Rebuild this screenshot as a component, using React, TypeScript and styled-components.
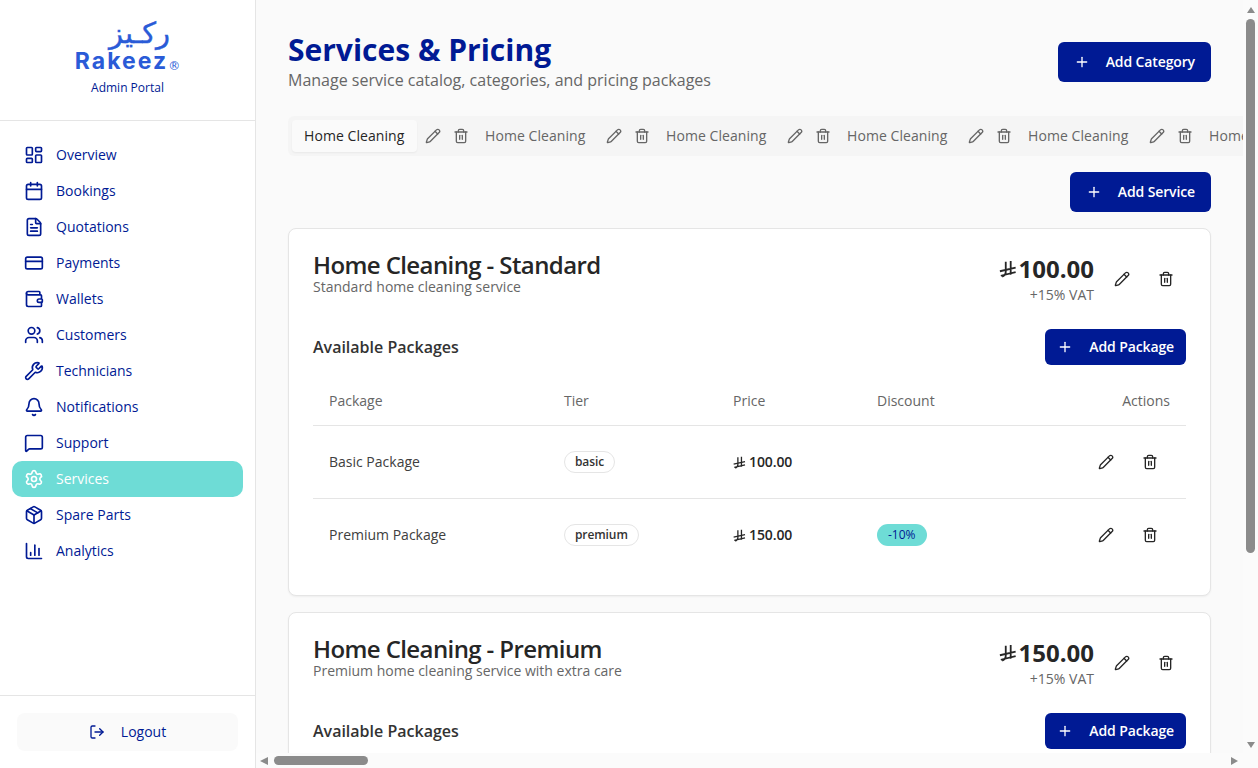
import styled, { createGlobalStyle } from "styled-components";
import {
  LayoutDashboard,
  Calendar,
  FileText,
  CreditCard,
  Wallet,
  Users,
  Wrench,
  Bell,
  MessageSquare,
  Settings,
  Package,
  BarChart3,
  LogOut,
  Pencil,
  Trash2,
  Plus,
} from "lucide-react";

const navy = "#001a94";
const teal = "#6edcd6";
const logoBlue = "#2a5bd7";
const thumb = "#8b8b8b";

const GlobalStyle = createGlobalStyle`
  html, body, #root {
    margin: 0;
    height: 100%;
  }
  body {
    font-family: "Open Sans", "Noto Sans", sans-serif;
    background: #fafafa;
    overflow: hidden;
  }
  * {
    box-sizing: border-box;
  }
`;

const Layout = styled.div`
  display: flex;
  height: 100vh;
`;

const Sidebar = styled.aside`
  display: flex;
  flex-direction: column;
  flex: 0 0 256px;
  height: 100%;
  background: #fff;
  border-right: 1px solid #e5e5e5;
`;

const Brand = styled.div`
  display: flex;
  flex-direction: column;
  align-items: center;
  height: 121px;
  padding-top: 18px;
  border-bottom: 1px solid #e5e5e5;
`;

const LogoArabic = styled.div`
  font-family: "DejaVu Sans", sans-serif;
  font-size: 29px;
  line-height: 30px;
  height: 30px;
  margin-left: 24px;
  color: ${logoBlue};
  -webkit-text-stroke: 0.4px ${logoBlue};
  direction: rtl;
`;

const LogoLatin = styled.div`
  margin-top: 1px;
  font-family: "Inter", sans-serif;
  font-size: 23px;
  font-weight: 700;
  line-height: 24px;
  letter-spacing: 2px;
  color: ${logoBlue};

  sup {
    font-family: "DejaVu Sans", sans-serif;
    font-size: 12px;
    font-weight: 400;
    letter-spacing: 0;
    vertical-align: -1px;
    line-height: 0;
  }
`;

const Portal = styled.div`
  margin-top: 7px;
  font-size: 12px;
  line-height: 16px;
  color: ${navy};
`;

const Nav = styled.nav`
  display: flex;
  flex-direction: column;
  flex: 1;
  padding: 16px 12px;
`;

const NavItem = styled.a<{ $active?: boolean }>`
  display: flex;
  align-items: center;
  gap: 12px;
  height: 36px;
  padding: 0 12px;
  border-radius: 10px;
  font-size: 14px;
  line-height: 20px;
  color: ${({ $active }) => ($active ? "#fff" : navy)};
  background: ${({ $active }) => ($active ? teal : "transparent")};
  font-weight: ${({ $active }) => ($active ? 500 : 400)};
`;

const SidebarFoot = styled.div`
  padding: 17px;
  border-top: 1px solid #e5e5e5;
`;

const LogoutButton = styled.button`
  display: flex;
  align-items: center;
  justify-content: center;
  gap: 16px;
  width: 100%;
  height: 38px;
  border: 0;
  border-radius: 8px;
  background: #fafafa;
  font: inherit;
  font-size: 14px;
  line-height: 20px;
  color: ${navy};
`;

const MainColumn = styled.div`
  display: flex;
  flex-direction: column;
  flex: 1;
  min-width: 0;
  height: 100%;
`;

const ContentRow = styled.div`
  display: flex;
  flex: 1;
  min-height: 0;
`;

const ScrollArea = styled.main`
  flex: 1;
  min-width: 0;
  overflow: hidden;
  background: #fafafa;
  padding: 32px;
`;

const VerticalBar = styled.div`
  display: flex;
  flex-direction: column;
  align-items: center;
  flex: 0 0 15px;
  padding: 7px 0 5px;
  background: #fbfbfb;
`;

const VerticalThumb = styled.div`
  width: 9px;
  height: 534px;
  margin-top: 6px;
  border-radius: 5px;
  background: ${thumb};
`;

const HorizontalBar = styled.div`
  display: flex;
  align-items: center;
  flex: 0 0 15px;
  padding: 0 20px 0 4px;
  background: #fbfbfb;
`;

const HorizontalThumb = styled.div`
  width: 94px;
  height: 9px;
  margin-left: 6px;
  border-radius: 5px;
  background: ${thumb};
`;

const Arrow = styled.div<{ $dir: "up" | "down" | "left" | "right" }>`
  width: 0;
  height: 0;
  flex: none;
  border-style: solid;
  border-color: transparent;
  ${({ $dir }) =>
    $dir === "up"
      ? `border-width: 0 4.5px 6px; border-bottom-color: ${thumb};`
      : $dir === "down"
        ? `margin-top: auto; border-width: 6px 4.5px 0; border-top-color: ${thumb};`
        : $dir === "left"
          ? `border-width: 4.5px 8px 4.5px 0; border-right-color: ${thumb};`
          : `margin-left: auto; border-width: 4.5px 0 4.5px 7px; border-left-color: ${thumb};`}
`;

const PageHead = styled.header`
  display: flex;
  justify-content: space-between;
  align-items: center;
  height: 60px;
  margin-bottom: 24px;
`;

const Title = styled.h1`
  margin: 0;
  font-size: 30px;
  line-height: 36px;
  font-weight: 700;
  color: ${navy};
`;

const Subtitle = styled.p`
  margin: 0;
  font-size: 16px;
  line-height: 24px;
  color: #666;
`;

const PrimaryButton = styled.button<{ $h: number; $px: number }>`
  display: flex;
  align-items: center;
  gap: 16px;
  height: ${({ $h }) => $h}px;
  padding: 0 ${({ $px }) => $px}px;
  border: 0;
  border-radius: 6px;
  background: ${navy};
  color: #fff;
  font: inherit;
  font-size: 14px;
  line-height: 20px;
  font-weight: 600;
  letter-spacing: -0.12px;
`;

const TabBar = styled.div`
  display: flex;
  width: max-content;
  align-items: center;
  height: 40px;
  padding: 4px;
  background: #f5f5f5;
  border-radius: 6px;
`;

const TabGroup = styled.div`
  display: flex;
  align-items: center;
`;

const Tab = styled.div<{ $active?: boolean }>`
  display: flex;
  align-items: center;
  min-width: 125px;
  height: 32px;
  padding: 0 12px;
  border-radius: 4px;
  font-size: 14px;
  line-height: 20px;
  letter-spacing: 0.07px;
  color: ${({ $active }) => ($active ? "#262626" : "#666")};
  background: ${({ $active }) => ($active ? "#fafafa" : "transparent")};
  box-shadow: ${({ $active }) => ($active ? "0 1px 2px rgba(0,0,0,.05)" : "none")};
`;

const TabIcons = styled.div`
  display: flex;
  align-items: center;
  gap: 12px;
  margin: 0 4px 0 8px;
  color: #666;
`;

const ServiceRow = styled.div`
  display: flex;
  justify-content: flex-end;
  margin: 16px 0;
`;

const Card = styled.section`
  margin-bottom: 16px;
  padding: 24px;
  background: #fff;
  border: 1px solid #e5e5e5;
  border-radius: 8px;
  box-shadow: 0 1px 2px rgba(0, 0, 0, 0.05);
`;

const CardHead = styled.div`
  display: flex;
  justify-content: space-between;
  height: 76px;
`;

const CardName = styled.h2`
  margin: 0;
  font-size: 24px;
  line-height: 24px;
  font-weight: 600;
  letter-spacing: -0.6px;
  color: #262626;
`;

const CardDesc = styled.p`
  margin: 0;
  font-size: 14px;
  line-height: 20px;
  color: #666;
`;

const PriceArea = styled.div`
  display: flex;
  align-items: center;
  gap: 10px;
  height: 52px;
  padding-right: 2px;
`;

const PriceBlock = styled.div`
  display: flex;
  flex-direction: column;
  align-items: flex-end;
`;

const BigPrice = styled.div`
  display: flex;
  align-items: center;
  gap: 2px;
  font-size: 24px;
  line-height: 32px;
  font-weight: 700;
  color: #262626;
`;

const Vat = styled.div`
  font-size: 14px;
  line-height: 20px;
  color: #666;
`;

const IconGroup = styled.div`
  display: flex;
  align-items: center;
  gap: 8px;
  color: #262626;
`;

const RowActions = styled(IconGroup)`
  margin-right: 2px;
`;

const IconButton = styled.span`
  display: flex;
  align-items: center;
  justify-content: center;
  width: 36px;
  height: 36px;
`;

const PackagesHead = styled.div`
  display: flex;
  justify-content: space-between;
  align-items: center;
  margin-bottom: 16px;
`;

const PackagesTitle = styled.h3`
  margin: 0;
  font-size: 16px;
  font-weight: 600;
  color: #333;
`;

const Table = styled.div`
  display: grid;
  grid-template-columns: 235px 169px 144px 1fr auto;
`;

const Cell = styled.div<{ $head?: boolean; $last?: boolean; $right?: boolean }>`
  display: flex;
  align-items: center;
  justify-content: ${({ $right }) => ($right ? "flex-end" : "flex-start")};
  height: ${({ $head, $last }) => ($head ? 45 : $last ? 72 : 73)}px;
  padding: 0 16px;
  padding-bottom: ${({ $head }) => ($head ? 4 : 0)}px;
  font-size: 14px;
  line-height: 20px;
  color: ${({ $head }) => ($head ? "#666" : "#404040")};
  border-bottom: ${({ $last }) => ($last ? "0" : "1px solid #e5e5e5")};
`;

const Tier = styled.span`
  padding: 2px 10px;
  border: 1px solid #e5e5e5;
  border-radius: 999px;
  font-size: 12px;
  line-height: 16px;
  font-weight: 600;
  letter-spacing: -0.1px;
  color: #333;
`;

const RowPrice = styled.span`
  display: flex;
  align-items: center;
  gap: 3px;
  font-weight: 600;
  letter-spacing: -0.1px;
  color: #262626;
`;

const Discount = styled.span`
  padding: 3px 11px;
  border-radius: 999px;
  background: ${teal};
  font-size: 12px;
  line-height: 16px;
  font-weight: 500;
  color: ${navy};
`;

const RiyalIcon = ({ size }: { size: number }) => (
  <svg width={size} height={size} viewBox="0 0 20 20" fill="none" stroke="currentColor" strokeWidth="2">
    <path d="M1 12.5 18.5 8.5M2 17.5 18.5 13.5M7.500 2v11c0 2.500-1.500 4.500-4 5.500M13 1v15.500" />
  </svg>
);

const navItems = [
  { label: "Overview", Icon: LayoutDashboard },
  { label: "Bookings", Icon: Calendar },
  { label: "Quotations", Icon: FileText },
  { label: "Payments", Icon: CreditCard },
  { label: "Wallets", Icon: Wallet },
  { label: "Customers", Icon: Users },
  { label: "Technicians", Icon: Wrench },
  { label: "Notifications", Icon: Bell },
  { label: "Support", Icon: MessageSquare },
  { label: "Services", Icon: Settings, active: true },
  { label: "Spare Parts", Icon: Package },
  { label: "Analytics", Icon: BarChart3 },
];

const services = [
  { name: "Home Cleaning - Standard", desc: "Standard home cleaning service", price: "100.00" },
  { name: "Home Cleaning - Premium", desc: "Premium home cleaning service with extra care", price: "150.00" },
];

const EditDelete = () => (
  <>
    <IconButton><Pencil size={16} /></IconButton>
    <IconButton><Trash2 size={16} /></IconButton>
  </>
);

const ServiceCard = ({ name, desc, price }: { name: string; desc: string; price: string }) => (
  <Card>
    <CardHead>
      <div>
        <CardName>{name}</CardName>
        <CardDesc>{desc}</CardDesc>
      </div>
      <PriceArea>
        <PriceBlock>
          <BigPrice>
            <RiyalIcon size={18} />
            {price}
          </BigPrice>
          <Vat>+15% VAT</Vat>
        </PriceBlock>
        <IconGroup><EditDelete /></IconGroup>
      </PriceArea>
    </CardHead>
    <PackagesHead>
      <PackagesTitle>Available Packages</PackagesTitle>
      <PrimaryButton $h={36} $px={12}>
        <Plus size={16} />
        Add Package
      </PrimaryButton>
    </PackagesHead>
    <Table>
      <Cell $head>Package</Cell>
      <Cell $head>Tier</Cell>
      <Cell $head>Price</Cell>
      <Cell $head>Discount</Cell>
      <Cell $head $right>Actions</Cell>
      <Cell>Basic Package</Cell>
      <Cell><Tier>basic</Tier></Cell>
      <Cell><RowPrice><RiyalIcon size={13} />100.00</RowPrice></Cell>
      <Cell />
      <Cell $right><RowActions><EditDelete /></RowActions></Cell>
      <Cell $last>Premium Package</Cell>
      <Cell $last><Tier>premium</Tier></Cell>
      <Cell $last><RowPrice><RiyalIcon size={13} />150.00</RowPrice></Cell>
      <Cell $last><Discount>-10%</Discount></Cell>
      <Cell $last $right><RowActions><EditDelete /></RowActions></Cell>
    </Table>
  </Card>
);

export default function App() {
  return (
    <Layout>
      <GlobalStyle />
      <Sidebar>
        <Brand>
          <LogoArabic>ركـيز</LogoArabic>
          <LogoLatin>Rakeez<sup>®</sup></LogoLatin>
          <Portal>Admin Portal</Portal>
        </Brand>
        <Nav>
          {navItems.map(({ label, Icon, active }) => (
            <NavItem key={label} $active={active}>
              <Icon size={20} />
              {label}
            </NavItem>
          ))}
        </Nav>
        <SidebarFoot>
          <LogoutButton>
            <LogOut size={16} />
            Logout
          </LogoutButton>
        </SidebarFoot>
      </Sidebar>
      <MainColumn>
        <ContentRow>
          <ScrollArea>
            <PageHead>
              <div>
                <Title>Services &amp; Pricing</Title>
                <Subtitle>Manage service catalog, categories, and pricing packages</Subtitle>
              </div>
              <PrimaryButton $h={40} $px={16}>
                <Plus size={16} />
                Add Category
              </PrimaryButton>
            </PageHead>
            <TabBar>
              {Array.from({ length: 6 }, (_, i) => (
                <TabGroup key={i}>
                  <Tab $active={i === 0}>Home Cleaning</Tab>
                  <TabIcons>
                    <Pencil size={16} />
                    <Trash2 size={16} />
                  </TabIcons>
                </TabGroup>
              ))}
            </TabBar>
            <ServiceRow>
              <PrimaryButton $h={40} $px={16}>
                <Plus size={16} />
                Add Service
              </PrimaryButton>
            </ServiceRow>
            {services.map((s) => (
              <ServiceCard key={s.name} {...s} />
            ))}
          </ScrollArea>
          <VerticalBar>
            <Arrow $dir="up" />
            <VerticalThumb />
            <Arrow $dir="down" />
          </VerticalBar>
        </ContentRow>
        <HorizontalBar>
          <Arrow $dir="left" />
          <HorizontalThumb />
          <Arrow $dir="right" />
        </HorizontalBar>
      </MainColumn>
    </Layout>
  );
}
